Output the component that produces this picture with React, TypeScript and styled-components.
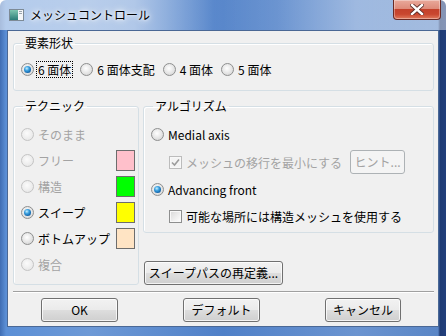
import React from "react";
import styled, { createGlobalStyle, css } from "styled-components";

const GlobalStyle = createGlobalStyle`
  html, body {
    margin: 0;
    padding: 0;
    background: #ffffff;
  }
  body {
    font-family: "Noto Sans CJK JP", "Noto Sans", sans-serif;
    font-size: 12px;
    color: #000;
  }
`;

const DISABLED = "#a3a3a3";

const Window = styled.div`
  width: 446px;
  height: 336px;
  box-sizing: border-box;
  padding: 0 7px 9px 7px;
  display: flex;
  flex-direction: column;
  border-radius: 6px 6px 0 0;
  overflow: hidden;
  background:
    linear-gradient(
        to right,
        rgba(255, 255, 255, 0.55) 0%,
        rgba(255, 255, 255, 0.5) 30%,
        rgba(255, 255, 255, 0.05) 48%,
        rgba(255, 255, 255, 0.1) 62%,
        rgba(255, 255, 255, 0.35) 80%,
        rgba(255, 255, 255, 0.45) 100%
      )
      top / 100% 30px no-repeat,
    linear-gradient(
      to right,
      #3f6db3 0px,
      #5b8fd6 6px,
      #6d99d6 20%,
      #4f80c8 50%,
      #6b94d0 80%,
      #5a86c6 438px,
      #1f3b74 440px,
      #223f7c 446px
    );
`;

const TitleBar = styled.div`
  height: 30px;
  flex: none;
  display: flex;
  align-items: flex-start;
`;

const TitleIcon = styled.svg`
  margin: 9px 0 0 2px;
  flex: none;
`;

const TitleText = styled.div`
  margin: 7px 0 0 6px;
  line-height: 16px;
  font-size: 12px;
  color: #000;
  text-shadow: 0 0 6px #fff, 0 0 3px #fff, 0 0 10px rgba(255, 255, 255, 0.8);
`;

const CloseButton = styled.div`
  margin-left: auto;
  margin-right: -2px;
  width: 48px;
  height: 20px;
  box-sizing: border-box;
  border: 1px solid #6a2a24;
  border-top: none;
  border-radius: 0 0 4px 4px;
  display: flex;
  align-items: center;
  justify-content: center;
  background: linear-gradient(
    to bottom,
    #e9a99b 0%,
    #de8b7a 45%,
    #c4412b 50%,
    #c9472f 75%,
    #e07a5d 100%
  );
  box-shadow: inset 0 0 0 1px rgba(255, 255, 255, 0.35);
`;

const Client = styled.div`
  flex: 1;
  display: flex;
  flex-direction: column;
  background: #f0f0f0;
  border: 1px solid #4a6895;
  padding: 5px 4px 0 5px;
`;

const Group = styled.fieldset<{ $pad: string }>`
  margin: 0;
  min-width: 0;
  border: 1px solid #d5dfe5;
  border-radius: 3px;
  padding: ${(p) => p.$pad};
  box-shadow: 1px 1px 0 #fff inset;
`;

const Legend = styled.legend`
  padding: 0 2px;
  margin-left: 2px;
  line-height: 14px;
  font-size: 12px;
  color: #000;
`;

const ShapeRow = styled.div`
  display: flex;
  align-items: center;
  gap: 8px;
  height: 16px;
`;

const Option = styled.label<{ $disabled?: boolean }>`
  display: flex;
  align-items: center;
  gap: 4px;
  height: 16px;
  white-space: nowrap;
  color: ${(p) => (p.$disabled ? DISABLED : "#000")};
`;

const Focus = styled.span`
  outline: 1px dotted #000;
  outline-offset: 0;
  padding: 0 1px;
  margin-left: -1px;
  line-height: 15px;
`;

const Radio = styled.span<{ $checked?: boolean; $disabled?: boolean }>`
  position: relative;
  flex: none;
  width: 13px;
  height: 13px;
  box-sizing: border-box;
  border-radius: 50%;
  border: 1px solid ${(p) => (p.$disabled ? "#c4c4c4" : "#8e8f8f")};
  background: ${(p) =>
    p.$disabled
      ? "radial-gradient(circle at 45% 40%, #fbfbfb 0%, #ececec 60%, #e2e2e2 100%)"
      : "radial-gradient(circle at 45% 40%, #ffffff 0%, #e4e4e4 55%, #cdcdcd 100%)"};
  ${(p) =>
    p.$checked &&
    css`
      &::after {
        content: "";
        position: absolute;
        left: 2px;
        top: 2px;
        width: 7px;
        height: 7px;
        border-radius: 50%;
        background: radial-gradient(
          circle at 40% 35%,
          #c8f0ff 0%,
          #3ea2e0 35%,
          #0d5fa6 75%,
          #0a3d72 100%
        );
      }
    `}
`;

const CheckBox = styled.span<{ $disabled?: boolean }>`
  flex: none;
  width: 13px;
  height: 13px;
  box-sizing: border-box;
  border: 1px solid ${(p) => (p.$disabled ? "#bcbcbc" : "#8e8f8f")};
  background: ${(p) =>
    p.$disabled
      ? "#f4f4f4"
      : "linear-gradient(135deg, #d8d8d8 0%, #f0f0f0 60%, #ffffff 100%)"};
  box-shadow: inset 0 0 0 1px #f8f8f8;
  display: flex;
  align-items: center;
  justify-content: center;
`;

const Middle = styled.div`
  display: grid;
  grid-template-columns: 126px 1fr;
  gap: 4px;
  margin-top: 8px;
`;

const TechList = styled.div`
  display: flex;
  flex-direction: column;
  gap: 5px;
`;

const TechRow = styled.div`
  display: flex;
  align-items: center;
  height: 21px;
`;

const Swatch = styled.span<{ $color: string }>`
  margin-left: auto;
  width: 19px;
  height: 21px;
  box-sizing: border-box;
  border: 1px solid #6d6d6d;
  background: ${(p) => p.$color};
`;

const RightColumn = styled.div`
  display: flex;
  flex-direction: column;
`;

const AlgoList = styled.div`
  display: flex;
  flex-direction: column;
`;

const AlgoRow = styled.div<{ $indent?: boolean; $gap: number; $h: number }>`
  display: flex;
  align-items: center;
  height: ${(p) => p.$h}px;
  margin-top: ${(p) => p.$gap}px;
  margin-left: ${(p) => (p.$indent ? 18 : 0)}px;
`;

const Button = styled.button<{ $w: number; $h?: number }>`
  width: ${(p) => p.$w}px;
  height: ${(p) => p.$h ?? 24}px;
  box-sizing: border-box;
  padding: 0;
  font-family: inherit;
  font-size: 12px;
  line-height: 14px;
  color: #000;
  border: 1px solid #707070;
  border-radius: 3px;
  background: linear-gradient(
    to bottom,
    #f2f2f2 0%,
    #ebebeb 48%,
    #dddddd 52%,
    #cfcfcf 100%
  );
  box-shadow: inset 0 0 0 1px rgba(255, 255, 255, 0.75);
  white-space: nowrap;
  &:disabled {
    color: ${DISABLED};
    border-color: #adb2b5;
    background: #f4f4f4;
    box-shadow: none;
  }
`;

const SweepButton = styled(Button)`
  margin-top: auto;
  margin-left: 1px;
`;

const HintButton = styled(Button)`
  margin-left: 8px;
`;

const Separator = styled.div`
  margin-top: 6px;
  height: 1px;
  background: #a0a0a0;
  box-shadow: 0 1px 0 #fff;
`;

const Footer = styled.div`
  display: flex;
  justify-content: center;
  gap: 65px;
  margin-top: 6px;
  padding-right: 5px;
`;

const CheckMark = () => (
  <svg width="9" height="9" viewBox="0 0 9 9">
    <path
      d="M1 4.5 L3.5 7 L8 1.5"
      fill="none"
      stroke="#9c9c9c"
      strokeWidth="1.6"
    />
  </svg>
);

const techniques = [
  { label: "そのまま", disabled: true },
  { label: "フリー", disabled: true, color: "#ffc0cb" },
  { label: "構造", disabled: true, color: "#00ff00" },
  { label: "スイープ", checked: true, color: "#ffff00" },
  { label: "ボトムアップ", color: "#ffe4c4" },
  { label: "複合", disabled: true },
];

const shapes = ["6 面体", "6 面体支配", "4 面体", "5 面体"];

export default function App() {
  return (
    <>
      <GlobalStyle />
      <Window>
        <TitleBar>
          <TitleIcon width="15" height="12" viewBox="0 0 15 12">
            <defs>
              <linearGradient id="tg" x1="0" y1="0" x2="0" y2="1">
                <stop offset="0" stopColor="#7ec6b0" />
                <stop offset="1" stopColor="#2b7d78" />
              </linearGradient>
            </defs>
            <rect x="0.5" y="0.5" width="14" height="11" fill="#f4f6f8" stroke="#7d8a96" />
            <rect x="1" y="1" width="8" height="10" fill="url(#tg)" />
            <rect x="10" y="2" width="3" height="1" fill="#9aa4ad" />
            <rect x="10" y="4" width="3" height="1" fill="#9aa4ad" />
          </TitleIcon>
          <TitleText>メッシュコントロール</TitleText>
          <CloseButton>
            <svg width="14" height="11" viewBox="0 0 14 11">
              <path
                d="M2 1 L12 10 M12 1 L2 10"
                stroke="#5a2b26"
                strokeWidth="4.2"
                strokeLinecap="square"
              />
              <path
                d="M2 1 L12 10 M12 1 L2 10"
                stroke="#ffffff"
                strokeWidth="2.4"
                strokeLinecap="square"
              />
            </svg>
          </CloseButton>
        </TitleBar>
        <Client>
          <Group $pad="11px 0 13px 7px">
            <Legend>要素形状</Legend>
            <ShapeRow>
              {shapes.map((s, i) => (
                <Option key={s}>
                  <Radio $checked={i === 0} />
                  {i === 0 ? <Focus>{s}</Focus> : <span>{s}</span>}
                </Option>
              ))}
            </ShapeRow>
          </Group>

          <Middle>
            <Group $pad="11px 3px 9px 7px">
              <Legend>テクニック</Legend>
              <TechList>
                {techniques.map((t) => (
                  <TechRow key={t.label}>
                    <Option $disabled={t.disabled}>
                      <Radio $checked={t.checked} $disabled={t.disabled} />
                      <span>{t.label}</span>
                    </Option>
                    {t.color && <Swatch $color={t.color} />}
                  </TechRow>
                ))}
              </TechList>
            </Group>

            <RightColumn>
              <Group $pad="0 0 8px 7px">
                <Legend>アルゴリズム</Legend>
                <AlgoList>
                  <AlgoRow $gap={13} $h={16}>
                    <Option>
                      <Radio />
                      <span>Medial axis</span>
                    </Option>
                  </AlgoRow>
                  <AlgoRow $indent $gap={8} $h={24}>
                    <Option $disabled>
                      <CheckBox $disabled>
                        <CheckMark />
                      </CheckBox>
                      <span>メッシュの移行を最小にする</span>
                    </Option>
                    <HintButton $w={55} disabled>
                      ヒント...
                    </HintButton>
                  </AlgoRow>
                  <AlgoRow $gap={7} $h={16}>
                    <Option>
                      <Radio $checked />
                      <span>Advancing front</span>
                    </Option>
                  </AlgoRow>
                  <AlgoRow $indent $gap={11} $h={16}>
                    <Option>
                      <CheckBox />
                      <span>可能な場所には構造メッシュを使用する</span>
                    </Option>
                  </AlgoRow>
                </AlgoList>
              </Group>
              <SweepButton $w={139}>スイープパスの再定義...</SweepButton>
            </RightColumn>
          </Middle>

          <Separator />

          <Footer>
            <Button $w={77}>OK</Button>
            <Button $w={77}>デフォルト</Button>
            <Button $w={76}>キャンセル</Button>
          </Footer>
        </Client>
      </Window>
    </>
  );
}
